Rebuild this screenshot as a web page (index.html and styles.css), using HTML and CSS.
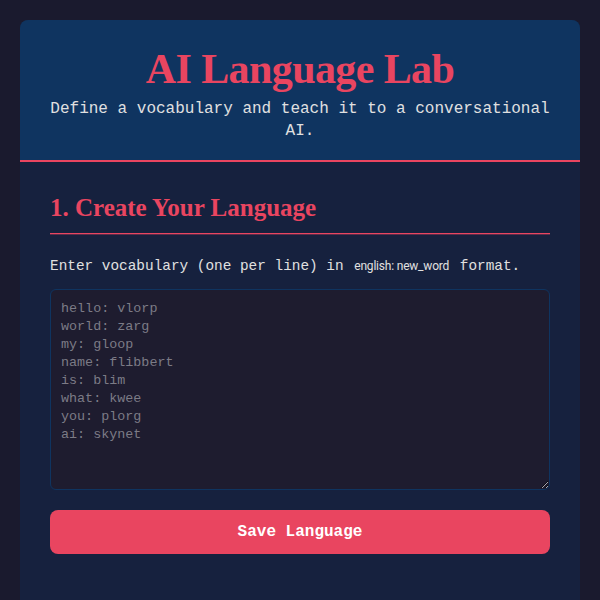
FILE: index.html
```html
<!DOCTYPE html>
<html lang="en">

<head>
    <meta charset="UTF-8">
    <meta name="viewport" content="width=device-width, initial-scale=1.0">
    <title>AI Language Lab</title>
    <link rel="stylesheet" href="styles.css">
</head>

<body>
    <div class="container">
        <header class="header">
            <h1>AI Language Lab</h1>
            <p class="subtitle">Define a vocabulary and teach it to a conversational AI.</p>
        </header>

        <section class="step">
            <h2>1. Create Your Language</h2>
            <p>Enter vocabulary (one per line) in <code>english: new_word</code> format.</p>
            <textarea id="vocab" placeholder="hello: vlorp
world: zarg
my: gloop
name: flibbert
is: blim
what: kwee
you: plorg
ai: skynet"></textarea>
            <button id="save-btn">Save Language</button>
        </section>
    </div>
</body>

</html>
```

FILE: styles.css
```css
body {
    margin: 0;
    padding: 20px;
    background-color: #1a1a2e;
    color: #e0e0e0;
    font-family: 'Liberation Mono', 'DejaVu Sans Mono', monospace;
}

.container {
    max-width: 560px;
    margin: 0 auto;
    background-color: #16213e;
    border-radius: 8px;
    overflow: hidden;
}

.header {
    background-color: #0f3460;
    text-align: center;
    padding: 25px 30px 18px;
    border-bottom: 2px solid #e94560;
}

.header h1 {
    font-family: 'Liberation Serif', serif;
    font-weight: bold;
    font-size: 42px;
    line-height: 48px;
    color: #e94560;
    margin: 0 0 5px;
    letter-spacing: -0.6px;
}

.subtitle {
    margin: 0;
    font-size: 16px;
    line-height: 22px;
    color: #e0e0e0;
}

/* room below the last step so the card runs on past the fold */
.step {
    padding: 30px 30px 60px;
    display: flex;
    flex-direction: column;
}

.step h2 {
    font-family: 'Liberation Serif', serif;
    font-weight: bold;
    font-size: 25px;
    line-height: 31px;
    color: #e94560;
    margin: 0;
    padding-bottom: 10px;
    border-bottom: 1px solid #e94560;
    box-shadow: 0 1px 0 rgba(233, 69, 96, 0.35);
}

.step p {
    margin: 20px 0 11px;
    font-size: 14.4px;
    line-height: 24px;
}

.step code {
    font-family: Roboto, 'Liberation Sans', sans-serif;
    font-size: 12px;
    letter-spacing: -0.2px;
    padding: 0 2px;
}

textarea {
    box-sizing: border-box;
    height: 201px;
    width: 100%;
    padding: 10px;
    background-color: #1e1c2f;
    color: #e0e0e0;
    border: 1px solid #0f3460;
    border-radius: 6px;
    font-family: 'Liberation Mono', 'DejaVu Sans Mono', monospace;
    font-size: 13.4px;
    line-height: 18px;
    resize: vertical;
}

textarea::placeholder {
    color: #7c7b86;
}

button {
    margin-top: 20px;
    height: 44px;
    border: none;
    border-radius: 8px;
    background-color: #e94560;
    color: #ffffff;
    font-family: 'Liberation Mono', 'DejaVu Sans Mono', monospace;
    font-weight: bold;
    font-size: 16px;
    cursor: pointer;
}
```
